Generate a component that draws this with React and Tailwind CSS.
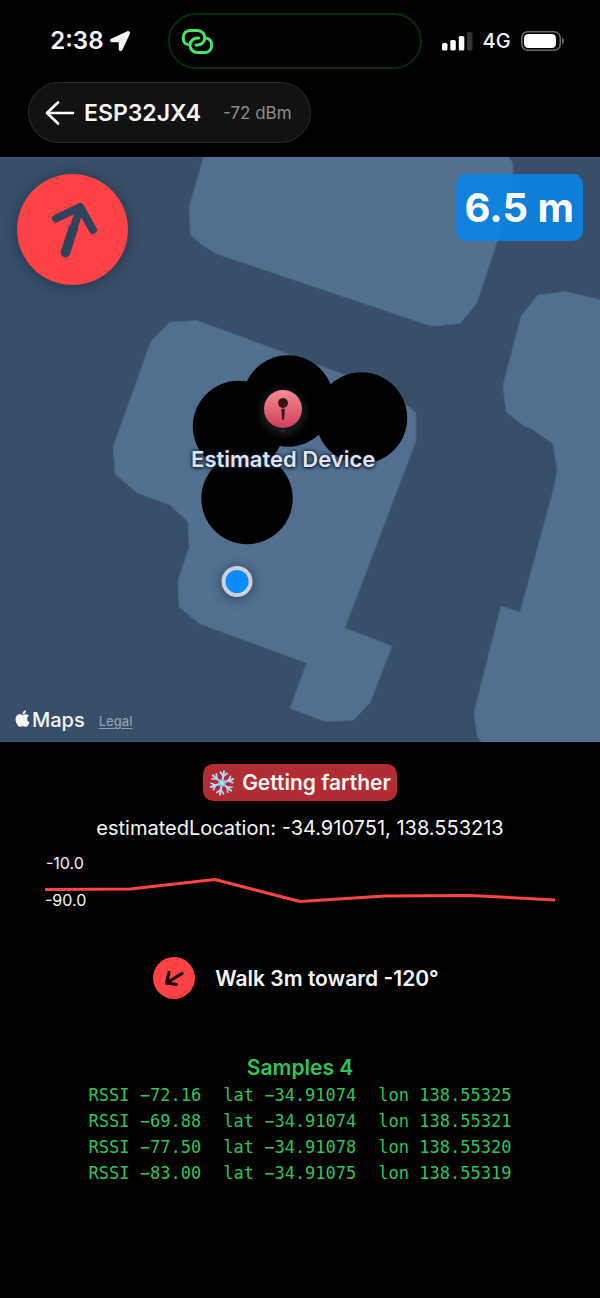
import { FaApple, FaLocationArrow } from "react-icons/fa";

const samples = [
  { rssi: "−72.16", lat: "−34.91074", lon: "138.55325" },
  { rssi: "−69.88", lat: "−34.91074", lon: "138.55321" },
  { rssi: "−77.50", lat: "−34.91078", lon: "138.55320" },
  { rssi: "−83.00", lat: "−34.91075", lon: "138.55319" },
];

function HotspotIcon() {
  return (
    <svg width="33" height="27" viewBox="0 0 33 27" fill="none" stroke="#4be36a" strokeWidth="3" strokeLinecap="round" aria-hidden="true">
      <path d="M6.8 16.6C3.6 15.8 2.2 12.8 2.2 10C2.2 5.5 5 2.5 9 2.5H16.5C20.5 2.5 23.8 5.7 23.8 9.7C23.8 13.7 20.5 17 16.5 17H15" />
      <path d="M26 10.4C29.2 11.2 30.6 14.2 30.6 17C30.6 21.5 27.8 24.5 23.8 24.5H16.3C12.3 24.5 9 21.3 9 17.3C9 13.3 12.3 10 16.3 10H17.8" />
    </svg>
  );
}

function StatusBar() {
  return (
    <div className="grid h-[82px] grid-cols-[1fr_254px_1fr] items-center pr-[11px]">
      <div className="flex items-center justify-end gap-[6px] pr-[38px]">
        <span className="text-[24px] font-semibold leading-[26px]">2:38</span>
        <FaLocationArrow className="size-5" aria-hidden="true" />
      </div>
      <div className="flex h-[56px] items-center rounded-full border-2 border-[#062f08] pl-[11px]">
        <HotspotIcon />
      </div>
      <div className="flex items-center gap-[10px] pl-[20px]">
        <svg width="31" height="20" viewBox="0 0 31 20" fill="#fff" aria-hidden="true">
          <rect x="0" y="12" width="5.5" height="7.5" rx="1.6" />
          <rect x="8.3" y="9" width="5.5" height="10.5" rx="1.6" />
          <rect x="16.8" y="5" width="5.5" height="14.5" rx="1.6" />
          <rect x="25" y="1" width="5.5" height="18.5" rx="1.6" fill="#333" />
        </svg>
        <span className="text-[20px] font-medium leading-none">4G</span>
        <svg width="44" height="20" viewBox="0 0 44 20" aria-hidden="true">
          <rect x="0.8" y="0.8" width="38.4" height="18.4" rx="6" fill="none" stroke="#6a6a6a" strokeWidth="1.6" />
          <rect x="3" y="3" width="32" height="14" rx="4.2" fill="#fff" />
          <path d="M41 6.5C43.6 7.6 43.6 12.4 41 13.5Z" fill="#6a6a6a" />
        </svg>
      </div>
    </div>
  );
}

function DeviceHeader() {
  return (
    <header className="mb-[14px] ml-7 flex h-[61px] w-max items-center rounded-full border border-[#2a2a2a] bg-[#121212] px-4">
      <button type="button" aria-label="Back" className="mr-[9px]">
        <svg width="30" height="24" viewBox="0 0 30 24" fill="none" stroke="#fff" strokeWidth="2.6" strokeLinecap="round" strokeLinejoin="round">
          <path d="M13 1.5L2 12L13 22.5M2 12H28" />
        </svg>
      </button>
      <h1 className="text-[23px] font-semibold leading-[26px]">ESP32JX4</h1>
      <span className="ml-[22px] mr-[2px] text-[17px] leading-[26px] text-[#8d8d8d]">-72 dBm</span>
    </header>
  );
}

function MapDrawing() {
  return (
    <svg className="block h-full w-full" viewBox="0 0 600 585" aria-hidden="true">
      <defs>
        <linearGradient id="pinFill" x1="0" y1="0" x2="0" y2="1">
          <stop offset="0" stopColor="#f58b94" />
          <stop offset="1" stopColor="#cf4059" />
        </linearGradient>
        <filter id="soft" x="-50%" y="-50%" width="200%" height="200%">
          <feGaussianBlur stdDeviation="5" />
        </filter>
      </defs>
      <rect width="600" height="585" fill="#394e68" />
      <g fill="#526f8f" stroke="#48637f" strokeWidth="1">
        <path d="M204 -2L189 50L190.500 78L201 87L215 96.500L300 125L428 168L434 169L460 166.500L477 146L513 36V6L507 -2Z" />
        <path d="M151 184L170 165L197 163.500L343 217L407 248L416 256V284L345 471L392 489L370 546L353 563.500L325 564.500L290 551.500L306.500 506L200 467L179 450L178 423L189 391L188 365L170 348L137 336L115 317L113 290Z" />
        <path d="M602 143L565 134.500L538 138L521 159L503 228L506 255L524 269L532 272L553 287L557 313L554 330L520 455L501 449L474 555L477 579L483 587H602Z" />
      </g>
      <g fill="#000">
        <circle cx="238.500" cy="269.500" r="45.700" />
        <circle cx="288" cy="244" r="45.700" />
        <circle cx="361.500" cy="261" r="45.700" />
        <circle cx="247" cy="341.500" r="45.700" />
      </g>
      <circle cx="283" cy="255" r="21" fill="#25272c" filter="url(#soft)" />
      <path d="M278 268L283 277L288 268Z" fill="#25272c" />
      <circle cx="283" cy="252" r="20.500" fill="#10141d" />
      <circle cx="283" cy="252" r="19" fill="url(#pinFill)" />
      <circle cx="283" cy="246" r="5" fill="#3d1218" />
      <path d="M281.300 251.800H284.900L284 262.800H282.200Z" fill="#3d1218" />
      <circle cx="237" cy="426" r="18" fill="#2c4059" opacity="0.6" filter="url(#soft)" />
      <circle cx="237" cy="424.500" r="15.500" fill="#ced2d6" />
      <circle cx="237" cy="424.500" r="11.500" fill="#0a8cff" />
    </svg>
  );
}

function MapView() {
  return (
    <section aria-label="Map" className="relative aspect-[40/39] w-full overflow-hidden">
      <MapDrawing />
      <div className="absolute left-[17px] top-[17px] size-[111px] rounded-full bg-[#ff4245] shadow-[0_2px_16px_rgba(20,35,55,0.55)]">
        <svg className="size-full" viewBox="0 0 111 111" fill="none" stroke="#2f445c" strokeWidth="8" strokeLinecap="round" strokeLinejoin="round" aria-hidden="true">
          <path d="M48.500 79L63 34M39 44.500L63 33L76 56" />
          <path d="M48.500 78.500L56 55" strokeWidth="9.500" />
        </svg>
      </div>
      <div className="absolute right-[17px] top-[17px] flex h-[67px] items-center rounded-[10px] bg-[#0a84e4]/90 px-[9px] text-[40px] font-bold text-white">
        6.5 m
      </div>
      <span className="absolute left-[47.2%] top-[51.7%] -translate-x-1/2 -translate-y-1/2 whitespace-nowrap text-[22px] font-semibold leading-none text-[#dfe5f2] [text-shadow:0_0_3px_#1c2740,0_0_4px_#1c2740,0_1px_3px_#1c2740]">
        Estimated Device
      </span>
      <div className="absolute bottom-[10px] left-[13px] flex items-center">
        <FaApple className="mb-1 size-[19px]" aria-hidden="true" />
        <span className="text-[20px] font-medium leading-6">Maps</span>
        <a href="#legal" className="ml-[14px] mt-1 text-[13px] font-medium text-[#8d9bac] underline underline-offset-2">Legal</a>
      </div>
    </section>
  );
}

function Snowflake() {
  const arms = [0, 60, 120, 180, 240, 300];
  return (
    <svg width="26" height="26" viewBox="-13 -13 26 26" fill="none" stroke="#b4dcfa" strokeWidth="2" strokeLinecap="round" strokeLinejoin="round" aria-hidden="true">
      <g transform="rotate(10)">
        {arms.map((angle) => (
          <g key={angle} transform={`rotate(${angle})`}>
            <path d="M0 0V-11.800" />
            <path d="M-3.400 -10.300L0 -6.800L3.400 -10.300" strokeWidth="1.700" />
          </g>
        ))}
        <path d="M0 -3.600L3.100 -1.800V1.800L0 3.600L-3.100 1.800V-1.800Z" stroke="#7fc0f2" strokeWidth="1.300" />
      </g>
    </svg>
  );
}

function SignalChart() {
  return (
    <figure aria-label="RSSI history" className="relative mx-[45px] mt-3 h-[58px] text-[16px] leading-none">
      <span className="absolute left-px top-[2px]">-10.0</span>
      <span className="absolute left-0 top-[39px]">-90.0</span>
      <svg className="block h-full w-full" viewBox="0 0 510 58" preserveAspectRatio="none" fill="none" aria-hidden="true">
        <path d="M0 36.500L85 36L170 26.500L255 48.500L340 43L425 42.500L510 47" stroke="#fb4549" strokeWidth="3" strokeLinejoin="round" vectorEffect="non-scaling-stroke" />
      </svg>
    </figure>
  );
}

function Samples() {
  return (
    <table className="mx-auto font-['DejaVu_Sans_Mono',monospace] text-[17px] leading-[26px] text-[#33c458]">
      <caption className="pb-px font-['Inter',sans-serif] text-[21px] font-semibold leading-[26px]">Samples 4</caption>
      <tbody>
        {samples.map((s) => (
          <tr key={s.lon}>
            <td className="p-0 pr-[22px]">RSSI {s.rssi}</td>
            <td className="p-0 pr-[22px]">lat {s.lat}</td>
            <td className="p-0">lon {s.lon}</td>
          </tr>
        ))}
      </tbody>
    </table>
  );
}

export default function App() {
  return (
    <main className="min-h-screen bg-black font-['Inter',sans-serif] text-[#f7f7f7]">
      <StatusBar />
      <DeviceHeader />
      <MapView />
      <div className="flex justify-center pt-[22px]">
        <p className="flex h-[37px] items-center gap-[7px] rounded-[10px] bg-[#b22d33] px-[6px] text-[21px] font-semibold leading-none">
          <Snowflake />
          Getting farther
        </p>
      </div>
      <p className="mt-[14px] text-center text-[20px] leading-[26px]">estimatedLocation: -34.910751, 138.553213</p>
      <SignalChart />
      <div className="mb-[56px] mt-[46px] flex items-center justify-center gap-5 pr-2">
        <span className="size-[42px] rounded-full bg-[#ff4245]">
          <svg className="size-full" viewBox="0 0 42 42" fill="none" stroke="#160404" strokeWidth="3.200" strokeLinecap="round" strokeLinejoin="round" aria-hidden="true">
            <path d="M29 16.500L13.500 26M16 15.500L13.500 26L23.500 27.500" />
          </svg>
        </span>
        <p className="text-[21px] font-semibold leading-none">Walk 3m toward -120°</p>
      </div>
      <Samples />
    </main>
  );
}
